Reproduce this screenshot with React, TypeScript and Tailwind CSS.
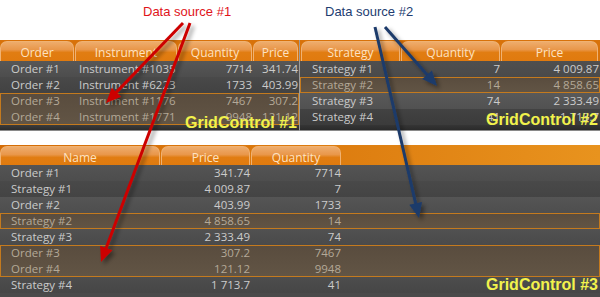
import React from "react";

type Row = { cells: string[]; sel?: boolean; bg: string };
type Col = { cls: string };

const SEL_BG = "bg-[linear-gradient(to_bottom,#594c3e,#625545)]";

function Tab({ label, cls }: { label: string; cls: string }) {
  return (
    <div
      className={
        "h-[20px] shrink-0 rounded-t-[7px] border border-b-0 border-[#f0b272] bg-[linear-gradient(to_bottom,#eeac6c_0%,#e9974a_40%,#e17d12_55%,#e07a0e_100%)] flex items-end justify-center text-[12px] leading-[17px] text-[#fde2c2] " +
        cls
      }
    >
      {label}
    </div>
  );
}

function GridRows({ rows, cols }: { rows: Row[]; cols: Col[] }) {
  const groups: Row[][] = [];
  rows.forEach((r, i) => {
    if (r.sel && i > 0 && rows[i - 1].sel) groups[groups.length - 1].push(r);
    else groups.push([r]);
  });
  return (
    <div className="flex flex-col">
      {groups.map((g, gi) => (
        <div
          key={gi}
          className={g[0].sel ? "flex flex-col shadow-[inset_0_0_0_1px_#c47a1e] " + SEL_BG : "flex flex-col"}
        >
          {g.map((r, ri) => (
            <div
              key={ri}
              className={
                "h-[16px] flex items-center text-[11.5px] leading-[16px] " +
                (r.sel ? "text-[#b4a998]" : "text-[#cbcbcb] " + r.bg)
              }
            >
              {r.cells.map((c, ci) => (
                <div key={ci} className={"shrink-0 overflow-hidden whitespace-nowrap " + cols[ci].cls}>
                  {c}
                </div>
              ))}
            </div>
          ))}
        </div>
      ))}
    </div>
  );
}

function Label({ text, cls }: { text: string; cls: string }) {
  return (
    <div
      className={
        "absolute right-[2px] font-['Liberation_Sans',Arial,sans-serif] font-bold text-[16px] leading-[16px] text-[#f2f24c] " +
        cls
      }
    >
      {text}
    </div>
  );
}

function Arrow({ x1, y1, x2, y2, color }: { x1: number; y1: number; x2: number; y2: number; color: string }) {
  const dx = x2 - x1;
  const dy = y2 - y1;
  const len = Math.hypot(dx, dy);
  const ux = dx / len;
  const uy = dy / len;
  const hl = 15;
  const hw = 6.5;
  const bx = x2 - ux * hl;
  const by = y2 - uy * hl;
  const px = -uy;
  const py = ux;
  return (
    <g filter="url(#sh)">
      <line x1={x1} y1={y1} x2={bx + ux * 2} y2={by + uy * 2} stroke={color} strokeWidth={3} />
      <polygon
        points={`${x2},${y2} ${bx + px * hw},${by + py * hw} ${bx - px * hw},${by - py * hw}`}
        fill={color}
      />
    </g>
  );
}

const g1Cols: Col[] = [
  { cls: "w-[75px] pl-[11px] text-left" },
  { cls: "w-[103px] pl-[4px] text-left" },
  { cls: "w-[76px] pr-[2px] text-right" },
  { cls: "w-[45px] pr-[1px] text-right" },
];
const g1Rows: Row[] = [
  { cells: ["Order #1", "Instrument #1035", "7714", "341.74"], bg: "bg-[linear-gradient(to_bottom,#575757,#4d4d4d)]" },
  { cells: ["Order #2", "Instrument #6223", "1733", "403.99"], bg: "bg-[linear-gradient(to_bottom,#494949,#424242)]" },
  { cells: ["Order #3", "Instrument #1176", "7467", "307.2"], sel: true, bg: "" },
  { cells: ["Order #4", "Instrument #1771", "9948", "121.12"], sel: true, bg: "" },
];

const g2Cols: Col[] = [
  { cls: "w-[101px] pl-[12px] text-left" },
  { cls: "w-[101px] pr-[2px] text-right" },
  { cls: "w-[98px] pr-[1px] text-right" },
];
const g2Rows: Row[] = [
  { cells: ["Strategy #1", "7", "4 009.87"], bg: "bg-[linear-gradient(to_bottom,#4f4f4f,#4a4a4a)]" },
  { cells: ["Strategy #2", "14", "4 858.65"], sel: true, bg: "" },
  { cells: ["Strategy #3", "74", "2 333.49"], bg: "bg-[linear-gradient(to_bottom,#595959,#515151)]" },
  { cells: ["Strategy #4", "41", "1 713.7"], bg: "bg-[linear-gradient(to_bottom,#424242,#3b3b3b)]" },
];

const g3Cols: Col[] = [
  { cls: "w-[161px] pl-[11px] text-left" },
  { cls: "w-[91px] pr-[2px] text-right" },
  { cls: "w-[91px] pr-[2px] text-right" },
];
const g3Rows: Row[] = [
  { cells: ["Order #1", "341.74", "7714"], bg: "bg-[linear-gradient(to_bottom,#545454,#4d4d4d)]" },
  { cells: ["Strategy #1", "4 009.87", "7"], bg: "bg-[linear-gradient(to_bottom,#494949,#444444)]" },
  { cells: ["Order #2", "403.99", "1733"], bg: "bg-[linear-gradient(to_bottom,#555555,#4e4e4e)]" },
  { cells: ["Strategy #2", "4 858.65", "14"], sel: true, bg: "" },
  { cells: ["Strategy #3", "2 333.49", "74"], bg: "bg-[linear-gradient(to_bottom,#515151,#4a4a4a)]" },
  { cells: ["Order #3", "307.2", "7467"], sel: true, bg: "" },
  { cells: ["Order #4", "121.12", "9948"], sel: true, bg: "" },
  { cells: ["Strategy #4", "1 713.7", "41"], bg: "bg-[linear-gradient(to_bottom,#4d4d4d,#464646)]" },
];

export default function App() {
  return (
    <div className="relative w-[600px] h-[297px] overflow-hidden bg-white font-['Open_Sans','Noto_Sans',sans-serif]">
      {/* captions */}
      <div className="h-[40px] flex pl-[143px] pt-[4px] font-['Liberation_Sans',Arial,sans-serif] text-[13px] leading-[15px]">
        <div className="w-[182px] text-[#e0141a]">Data source #1</div>
        <div className="text-[#223c70]">Data source #2</div>
      </div>

      {/* top grids */}
      <div className="flex h-[91px]">
        <div className="relative w-[300px] border-r border-[#9c9c9c] bg-[#444] flex flex-col">
          <div className="h-[21px] pt-[1px] flex gap-[1px] bg-[#d8720a]">
            <Tab label="Order" cls="w-[74px]" />
            <Tab label="Instrument" cls="w-[102px]" />
            <Tab label="Quantity" cls="w-[74px]" />
            <Tab label="Price" cls="w-[45px]" />
          </div>
          <GridRows rows={g1Rows} cols={g1Cols} />
          <div className="h-[6px] bg-[linear-gradient(to_bottom,#3c3c3c,#2c2c2c)] border-b border-[#8a8a8a]" />
          <Label text="GridControl #1" cls="bottom-[0px]" />
        </div>
        <div className="relative w-[300px] bg-[#444] flex flex-col">
          <div className="h-[21px] pt-[1px] pl-[1px] flex gap-[1px] bg-[#d8720a]">
            <Tab label="Strategy" cls="w-[99px]" />
            <Tab label="Quantity" cls="w-[99px]" />
            <Tab label="Price" cls="w-[97px]" />
          </div>
          <GridRows rows={g2Rows} cols={g2Cols} />
          <div className="h-[6px] bg-[linear-gradient(to_bottom,#353535,#2a2a2a)] border-b border-[#8a8a8a]" />
          <Label text="GridControl #2" cls="bottom-[3px]" />
        </div>
      </div>

      <div className="h-[14px]" />

      {/* bottom grid */}
      <div className="relative h-[152px] bg-[#4a4a4a] flex flex-col">
        <div className="h-[20px] pt-[1px] flex gap-[1px] bg-[linear-gradient(to_right,#d46c06,#dc7a0e_50%,#e8931e)]">
          <Tab label="Name" cls="w-[160px]" />
          <Tab label="Price" cls="w-[89px]" />
          <Tab label="Quantity" cls="w-[90px]" />
        </div>
        <GridRows rows={g3Rows} cols={g3Cols} />
        <Label text="GridControl #3" cls="bottom-[4px]" />
      </div>

      {/* arrows overlay */}
      <svg className="absolute inset-0 pointer-events-none" width={600} height={297} viewBox="0 0 600 297">
        <defs>
          <filter id="sh" x="-20%" y="-20%" width="140%" height="140%">
            <feDropShadow dx={3} dy={3} stdDeviation={2} floodColor="#000" floodOpacity={0.4} />
          </filter>
        </defs>
        <Arrow x1={183} y1={23} x2={106} y2={103} color="#cc0000" />
        <Arrow x1={190} y1={23} x2={101} y2={262} color="#cc0000" />
        <Arrow x1={385} y1={27} x2={437} y2={86} color="#1c3a6b" />
        <Arrow x1={375} y1={27} x2={419} y2={218} color="#1c3a6b" />
      </svg>
    </div>
  );
}
